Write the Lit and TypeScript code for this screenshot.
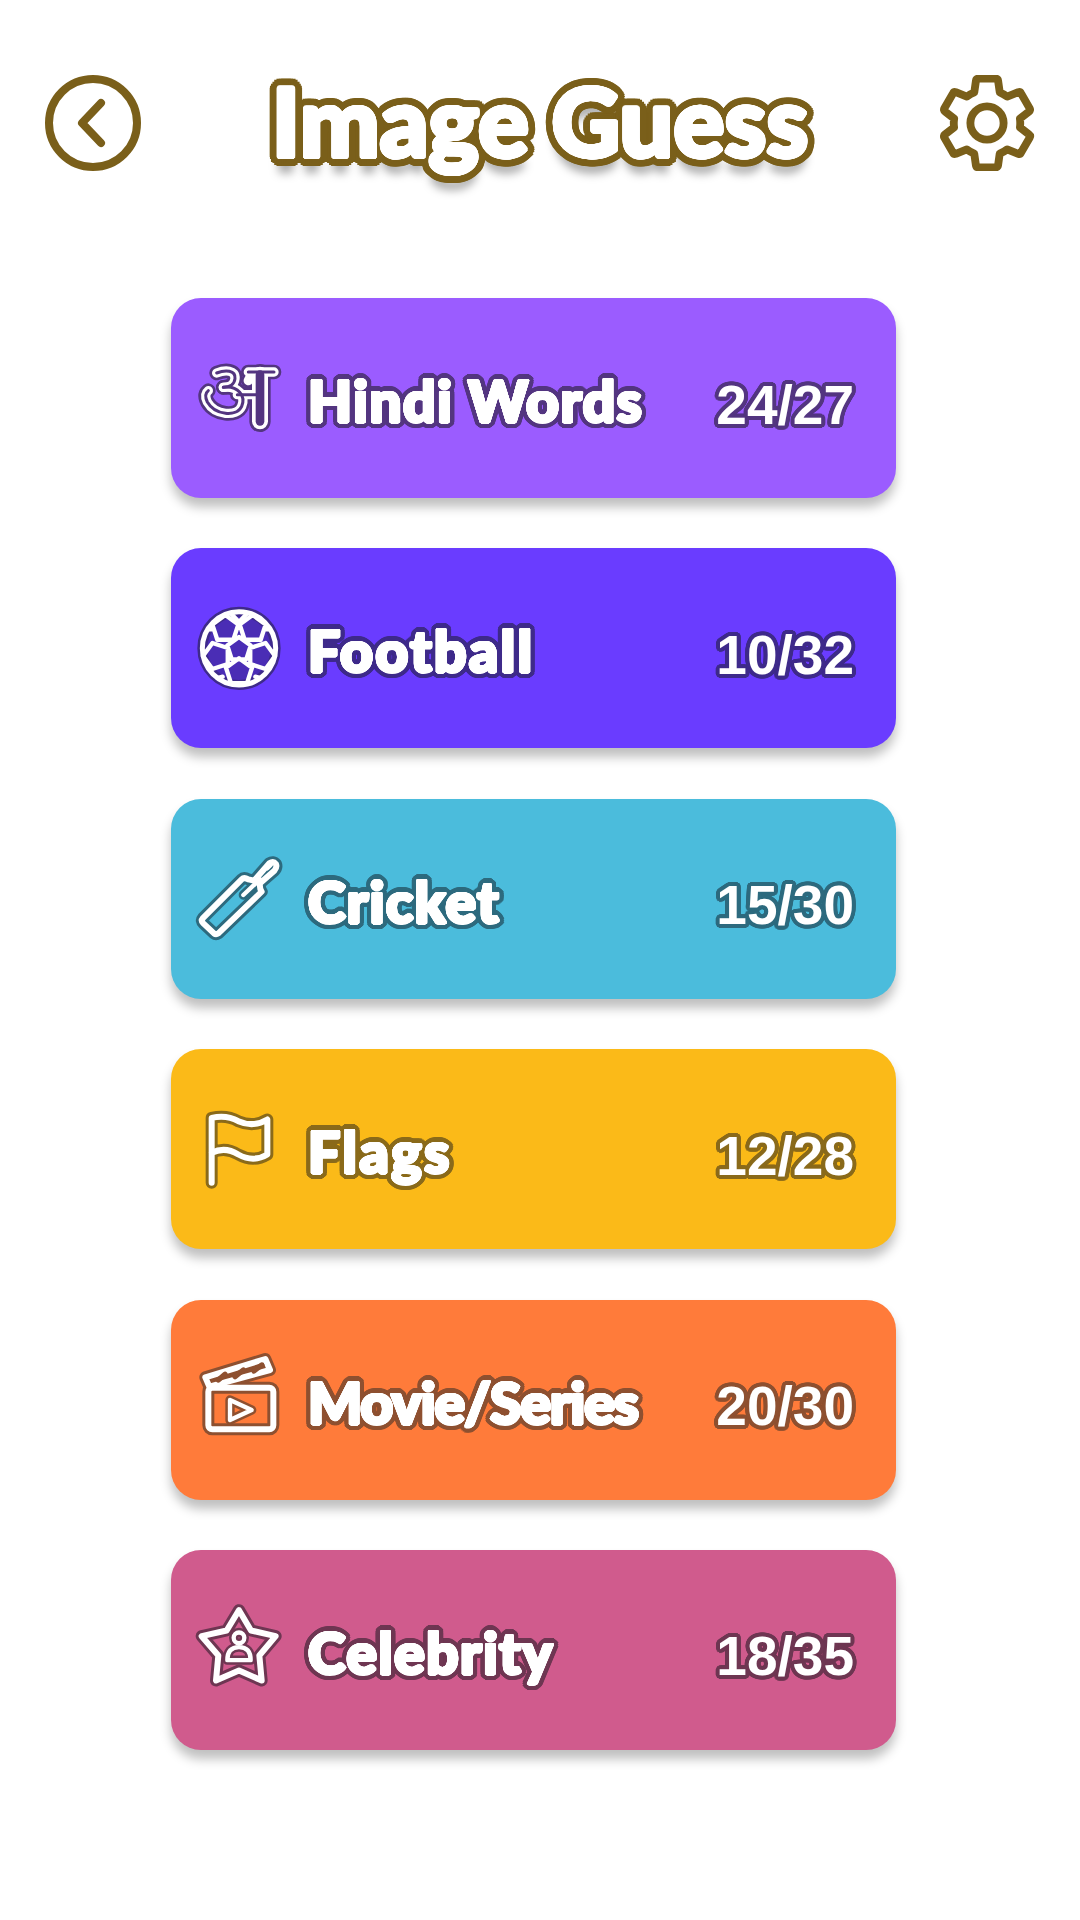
import { LitElement, html, svg, css, unsafeCSS, type TemplateResult } from 'lit';
import { customElement } from 'lit/decorators.js';

// outline built from text-shadows so the corners stay round
const ring = (r: number, colour: string) => {
  const parts: string[] = [];
  for (let i = 0; i < 24; i++) {
    const a = (i / 24) * Math.PI * 2;
    const x = (Math.cos(a) * r).toFixed(2);
    const y = (Math.sin(a) * r).toFixed(2);
    parts.push(`${x}px ${y}px 0 ${colour}`);
  }
  return parts.join(', ');
};

// white ring first: it thickens the letters, the dark ring goes round that
const outline = (bold: number, edge: number) =>
  unsafeCSS(`${ring(bold, '#fff')}, ${ring(bold + edge, 'var(--edge)')}`);

// pentagon for the football patches, rot is the angle of its first corner
const pentagon = (cx: number, cy: number, r: number, rot: number) => {
  const pts: string[] = [];
  for (let i = 0; i < 5; i++) {
    const a = ((rot + i * 72) * Math.PI) / 180;
    pts.push(`${(cx + Math.cos(a) * r).toFixed(1)} ${(cy + Math.sin(a) * r).toFixed(1)}`);
  }
  return `M${pts.join('L')}Z`;
};

const patches = [
  pentagon(177, 180, 37, -90),
  pentagon(136, 118, 41, -90),
  pentagon(218, 118, 41, -90),
  pentagon(110, 200, 41, 180),
  pentagon(244, 200, 41, 0),
  pentagon(177, 248, 41, -90),
].join('');

const hindiTop = 'M110 95C135 85 168 85 165 112C163 130 148 138 130 138';
const hindiBowl = 'M130 138C175 132 198 165 185 195C170 228 105 222 82 182C74 165 76 155 85 148';

interface Category {
  tone: string;
  label: string;
  score: string;
  tracking: number;
  shift: number;
  icon: TemplateResult;
  under?: TemplateResult;
  over?: TemplateResult;
}

const categories: Category[] = [
  {
    tone: 'violet',
    label: 'Hindi Words',
    score: '24/27',
    tracking: 1.4,
    shift: 10,
    icon: svg`
      <path d=${hindiTop} />
      <path d=${hindiBowl} />
      <path d="M205 92H282M172 160H240M205 118L218 92" />
      <path class="fat" d="M240 100V240" />`,
    over: svg`
      <path class="fine" d=${hindiTop} />
      <path class="fine" d=${hindiBowl} />
      <path class="fine" d="M205 92H282M172 160H240" />
      <path class="stem" d="M240 100V240" />`,
  },
  {
    tone: 'indigo',
    label: 'Football',
    score: '10/32',
    tracking: 2.4,
    shift: 4,
    under: svg`<circle cx="177" cy="177" r="110" fill="#4a2db5" />`,
    icon: svg`
      <circle cx="177" cy="177" r="110" />
      <path class="t" d=${patches} />
      <path class="t" d="M177 98L152 72M177 98L202 72M96 120L84 120M258 120L270 120M128 262L112 266M226 262L242 266" />`,
  },
  {
    tone: 'sky',
    label: 'Cricket',
    score: '15/30',
    tracking: 1.3,
    shift: 3,
    icon: svg`
      <path d="M68 235L185 118Q192 111 205 118L222 122L268 70Q280 62 288 72Q292 82 283 92L240 130Q238 145 245 155L115 280Q108 285 102 280L70 250Q62 242 68 235Z" />
      <path class="t" d="M190 165L240 118M262 85L272 75" />`,
  },
  {
    tone: 'amber',
    label: 'Flags',
    score: '12/28',
    tracking: 2.6,
    shift: 1.5,
    icon: svg`
      <path d="M95 280V85Q140 75 175 95Q220 115 262 90V195Q220 220 175 195Q135 170 95 190" />`,
  },
  {
    tone: 'orange',
    label: 'Movie/Series',
    score: '20/30',
    tracking: -1,
    shift: 15,
    icon: svg`
      <rect x="85" y="128" width="195" height="125" rx="12" />
      <path d="M76 97L256 42L270 75L88 125Z" />
      <path class="t" d="M150 165L215 195L150 225Z" />`,
    over: svg`<path class="bars" d="M115 105L135 88M165 95L190 75M222 78L245 60" />`,
  },
  {
    tone: 'rose',
    label: 'Celebrity',
    score: '18/35',
    tracking: 1.4,
    shift: 13.5,
    icon: svg`
      <path d="M177 47L213 108L287 125L238 183L245 258L177 228L108 258L115 183L65 125L140 108Z" />
      <circle class="t" cx="177" cy="130" r="16" />
      <path class="t" d="M142 197Q142 158 177 158Q212 158 212 197Z" />`,
  },
];

@customElement('app-root')
export class AppRoot extends LitElement {
  private _renderIcon(c: Category) {
    return html`
      <svg class="icon" viewBox="0 0 360 360" aria-hidden="true">
        <g transform="translate(0 ${c.shift})">
          ${c.under ?? ''}
          <g class="edge">${c.icon}</g>
          <g class="line">${c.icon}</g>
          <g class="core">${c.over ?? ''}</g>
        </g>
      </svg>
    `;
  }

  private _renderCard(c: Category) {
    return html`
      <div class="card ${c.tone}">
        ${this._renderIcon(c)}
        <span class="label" style="letter-spacing:${c.tracking}px">${c.label}</span>
        <span class="score">${c.score}</span>
      </div>
    `;
  }

  override render() {
    return html`
      <header class="top">
        <svg class="nav" viewBox="0 0 96 96" aria-label="Back">
          <circle cx="48" cy="48" r="44" />
          <path d="M56 28L37 48L56 68" />
        </svg>
        <h1 class="title">Image Guess</h1>
        <svg class="nav" viewBox="1.6 1.6 20.8 20.8" aria-label="Settings">
          <path class="gear" d="M19.14 12.94c.04-.3.06-.61.06-.94 0-.32-.02-.64-.07-.94l2.03-1.58c.18-.14.23-.41.12-.61l-1.92-3.32c-.12-.22-.37-.29-.59-.22l-2.39.96c-.5-.38-1.03-.7-1.62-.94l-.36-2.54c-.04-.24-.24-.41-.48-.41h-3.84c-.24 0-.43.17-.47.41l-.36 2.54c-.59.24-1.13.57-1.62.94l-2.39-.96c-.22-.08-.47 0-.59.22L2.74 8.87c-.12.21-.08.47.12.61l2.03 1.58c-.05.3-.09.63-.09.94s.02.64.07.94l-2.03 1.58c-.18.14-.23.41-.12.61l1.92 3.32c.12.22.37.29.59.22l2.39-.96c.5.38 1.03.7 1.62.94l.36 2.54c.05.24.24.41.48.41h3.84c.24 0 .44-.17.47-.41l.36-2.54c.59-.24 1.13-.56 1.62-.94l2.39.96c.22.08.47 0 .59-.22l1.92-3.32c.12-.22.07-.47-.12-.61l-2.01-1.58zM12 15.6c-1.98 0-3.6-1.62-3.6-3.6s1.62-3.6 3.6-3.6 3.6 1.62 3.6 3.6-1.62 3.6-3.6 3.6z" />
        </svg>
      </header>
      <main class="list">
        ${categories.map(c => this._renderCard(c))}
      </main>
    `;
  }

  static override styles = css`
    :host {
      display: block;
      width: 1080px;
      height: 1920px;
      background: #fff;
      overflow: hidden;
    }

    .top {
      display: flex;
      align-items: center;
      justify-content: space-between;
      padding: 75px 45px 0;
    }

    .nav {
      width: 96px;
      height: 96px;
      fill: none;
      stroke: #7a5f1a;
      stroke-width: 8;
      stroke-linecap: round;
      stroke-linejoin: round;
    }

    .gear {
      stroke-width: 1.7;
    }

    .title {
      --edge: #7a5f1a;
      margin: -6px 0 0;
      color: #fff;
      font: 900 95px Lato, sans-serif;
      line-height: 94px;
      text-shadow: ${outline(2, 7)}, 0 16px 10px rgba(0, 0, 0, 0.35);
    }

    .list {
      display: flex;
      flex-direction: column;
      gap: 50.4px;
      width: 725px;
      margin: 127px 0 0 171px;
    }

    .card {
      display: flex;
      align-items: center;
      height: 200px;
      padding: 0 42px 0 9px;
      border-radius: 30px;
      background: var(--tone);
      box-shadow: 0 9px 11px rgba(0, 0, 0, 0.25);
    }

    .violet { --tone: #9b5cff; --edge: #533580; }
    .indigo { --tone: #6a3cff; --edge: #3e2a8a; }
    .sky { --tone: #4bbcdc; --edge: #2d6a7e; }
    .amber { --tone: #fbba18; --edge: #8a6a1a; }
    .orange { --tone: #ff7b3a; --edge: #8e5030; }
    .rose { --tone: #d05b8d; --edge: #6e3652; }

    .icon {
      flex: none;
      width: 120px;
      height: 120px;
      fill: none;
      stroke-linecap: round;
      stroke-linejoin: round;
    }

    .edge {
      stroke: var(--edge);
      stroke-width: 36;
    }

    .line {
      stroke: #fff;
      stroke-width: 18;
    }

    .edge .t {
      stroke-width: 28;
    }

    .line .t {
      stroke-width: 13;
    }

    /* ball patches sit on a filled disc, only the rim gets a dark band */
    .indigo .edge {
      stroke-width: 30;
    }

    .indigo .line {
      stroke-width: 15;
    }

    .indigo .edge .t {
      stroke-width: 0;
    }

    /* the hindi letter is a double outline, so it needs wider bands */
    .violet .edge {
      stroke-width: 44;
    }

    .violet .line {
      stroke-width: 28;
    }

    .violet .edge .fat {
      stroke-width: 64;
    }

    .violet .line .fat {
      stroke-width: 48;
    }

    .core {
      stroke: var(--edge);
    }

    .fine {
      stroke-width: 9;
    }

    .stem {
      stroke-width: 26;
    }

    .bars {
      stroke-width: 16;
    }

    .label {
      flex: 1;
      margin: 4px 0 0 8px;
      color: #fff;
      font: 900 57px Lato, sans-serif;
      text-shadow: ${outline(1.5, 4.5)};
    }

    .score {
      margin-top: 13px;
      color: #fff;
      font: 700 55px 'Liberation Sans', Arial, sans-serif;
      text-shadow: ${unsafeCSS(ring(4, 'var(--edge)'))};
    }
  `;
}
